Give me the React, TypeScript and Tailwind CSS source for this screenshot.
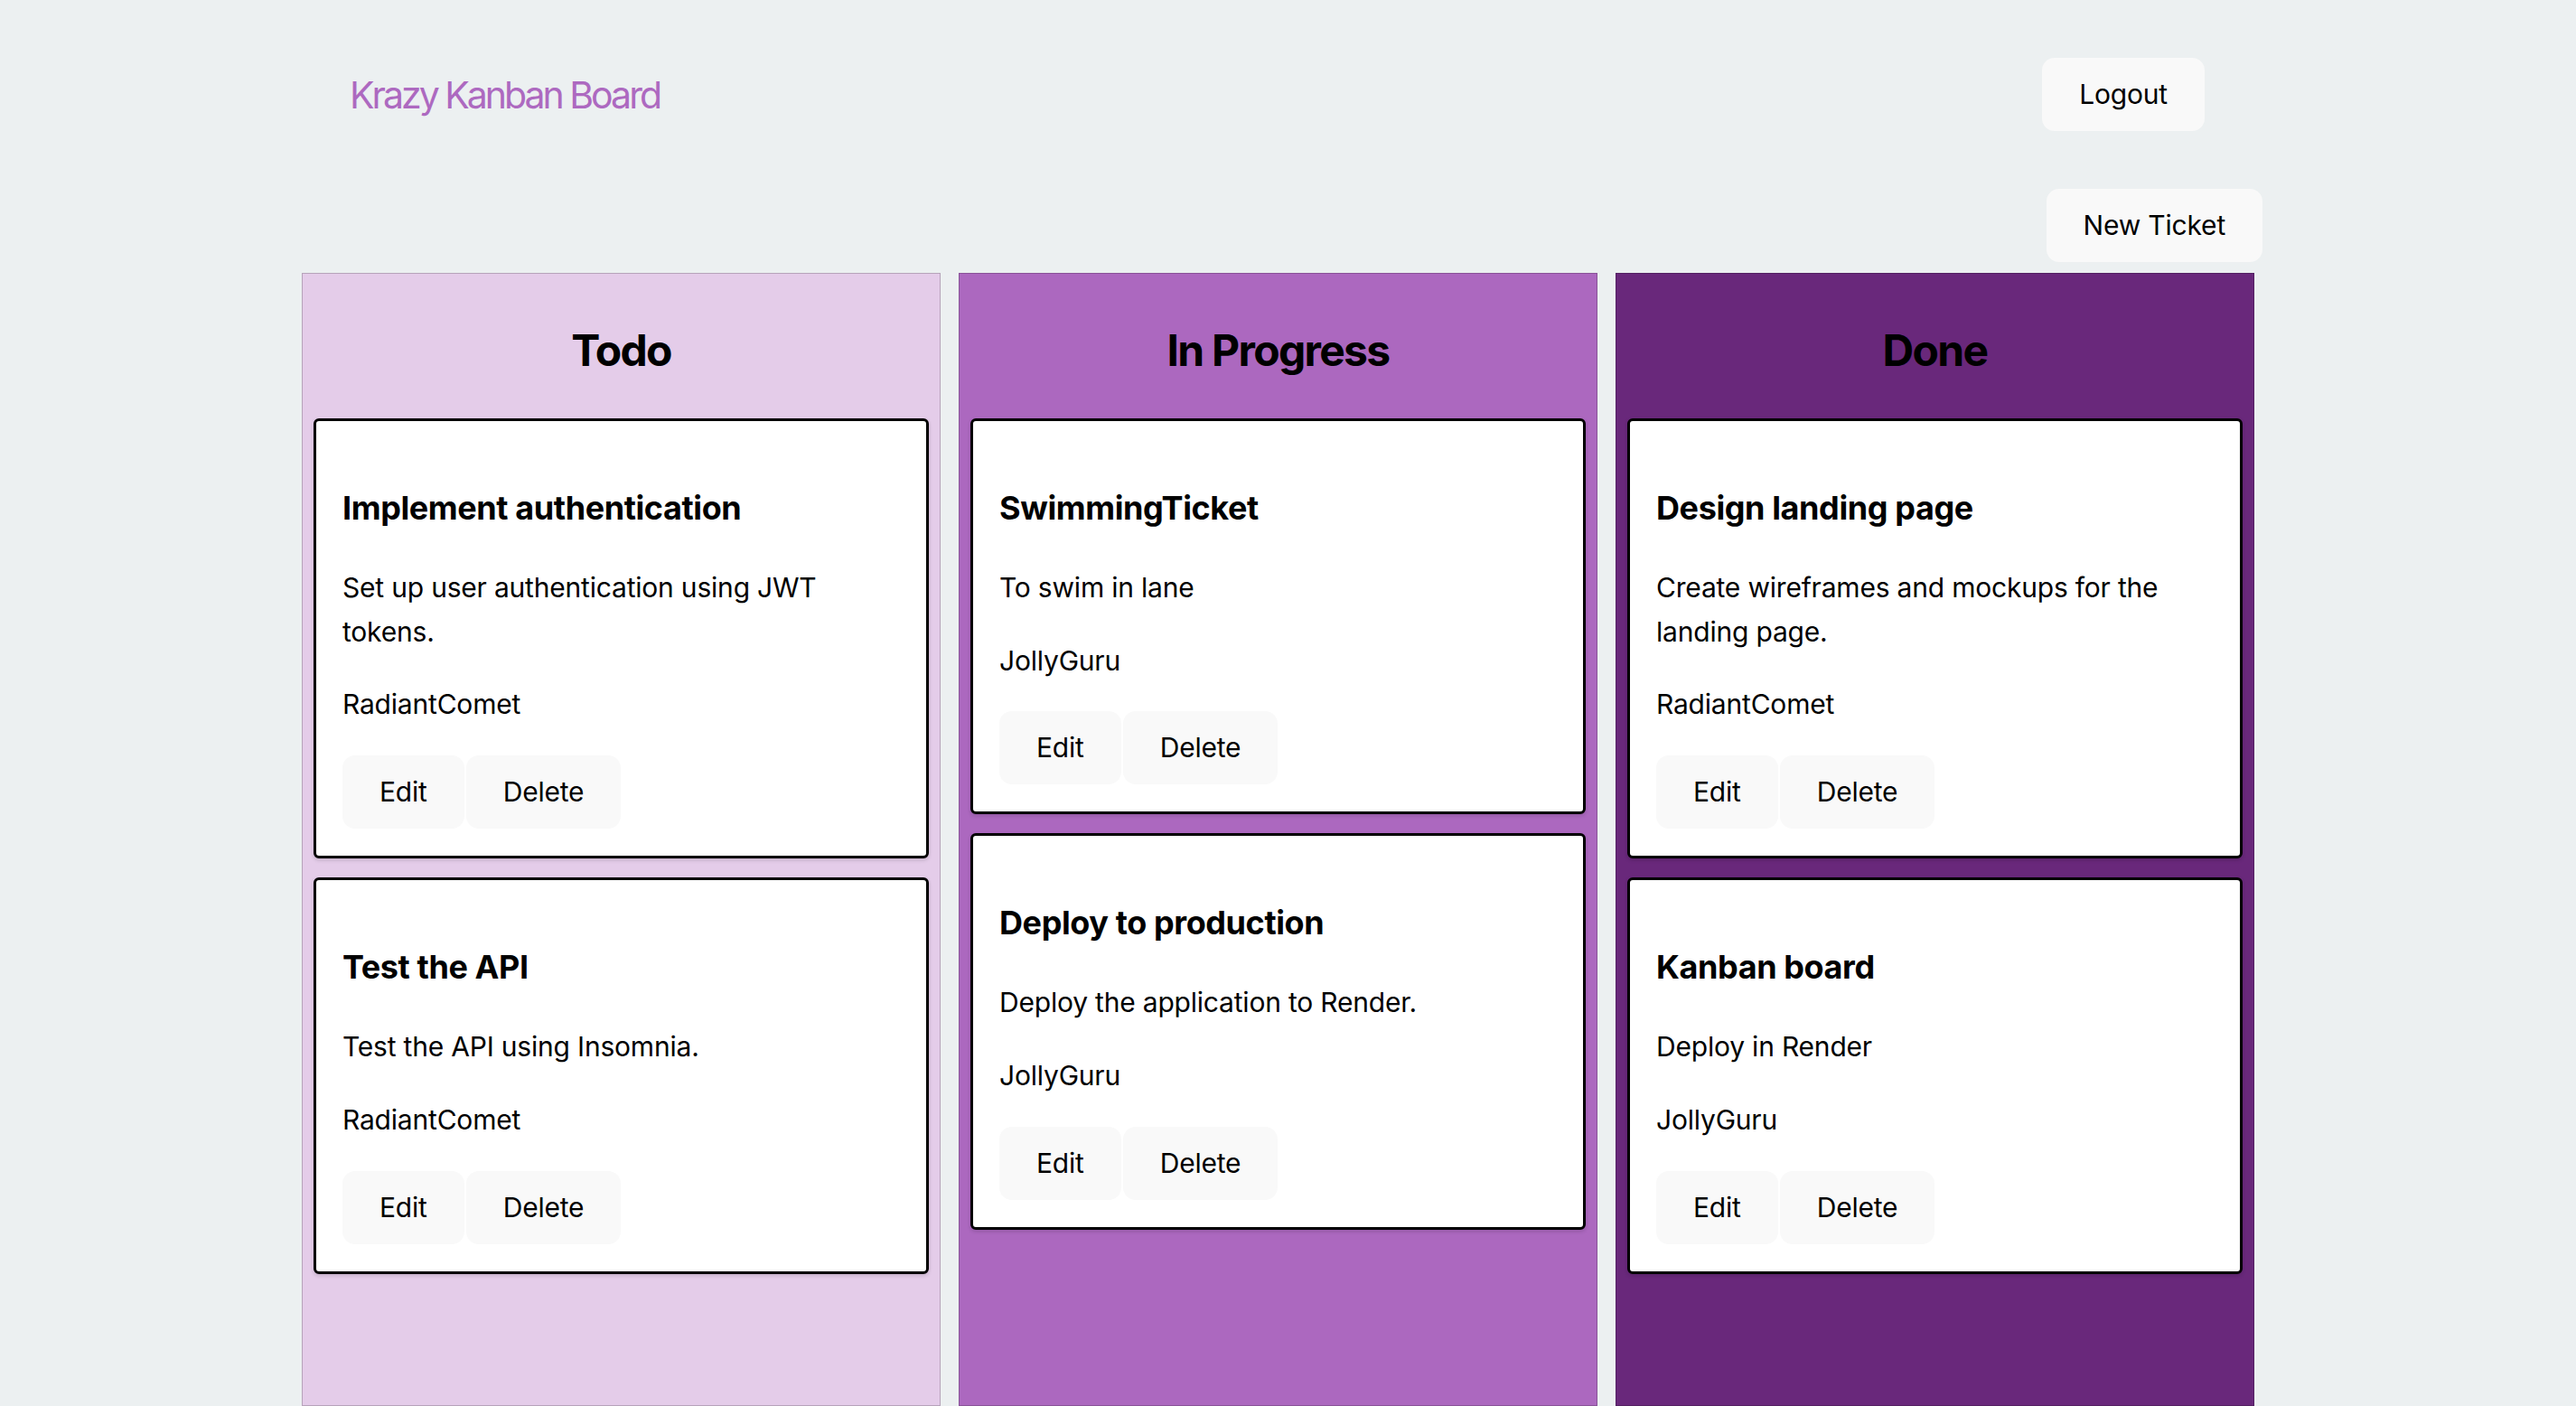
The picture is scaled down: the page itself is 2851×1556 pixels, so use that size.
import React from "react";

type Ticket = { title: string; desc: string; user: string };

const columns: { name: string; bg: string; tickets: Ticket[] }[] = [
  {
    name: "Todo",
    bg: "bg-[#e4cce9]",
    tickets: [
      {
        title: "Implement authentication",
        desc: "Set up user authentication using JWT tokens.",
        user: "RadiantComet",
      },
      { title: "Test the API", desc: "Test the API using Insomnia.", user: "RadiantComet" },
    ],
  },
  {
    name: "In Progress",
    bg: "bg-[#ac68bf]",
    tickets: [
      { title: "SwimmingTicket", desc: "To swim in lane", user: "JollyGuru" },
      { title: "Deploy to production", desc: "Deploy the application to Render.", user: "JollyGuru" },
    ],
  },
  {
    name: "Done",
    bg: "bg-[#69287b]",
    tickets: [
      {
        title: "Design landing page",
        desc: "Create wireframes and mockups for the landing page.",
        user: "RadiantComet",
      },
      { title: "Kanban board", desc: "Deploy in Render", user: "JollyGuru" },
    ],
  },
];

function Btn({ children, className = "" }: { children: React.ReactNode; className?: string }) {
  return (
    <button
      className={
        "flex h-[81px] items-center rounded-[14px] bg-[#f9f9f9] px-[41px] text-[30px] font-normal tracking-[-0.2px] text-black " +
        className
      }
    >
      {children}
    </button>
  );
}

function Card({ t }: { t: Ticket }) {
  return (
    <div className="flex flex-col rounded-[6px] border-[3px] border-black bg-white px-[29px] pt-[74px] pb-[30px] shadow-[0_2px_4px_rgba(0,0,0,0.15)]">
      <h3 className="text-[36px] font-bold leading-[44px] tracking-[-0.4px] text-black">{t.title}</h3>
      <p className="mt-[42px] text-[30px] leading-[48.7px] tracking-[-0.2px] text-black">{t.desc}</p>
      <p className="mt-[32px] text-[30px] leading-[48.7px] tracking-[-0.2px] text-black">{t.user}</p>
      <div className="mt-[32px] flex gap-[2px]">
        <Btn>Edit</Btn>
        <Btn>Delete</Btn>
      </div>
    </div>
  );
}

export default function App() {
  return (
    <div className="flex h-screen flex-col overflow-hidden bg-[#ecf0f1] font-['Inter',sans-serif]">
      <nav className="mt-[64px] flex h-[81px] items-center pl-[387px] pr-[411px]">
        <h1 className="text-[41px] font-normal leading-[50px] tracking-[-3px] text-[#ad69c0]">Krazy Kanban Board</h1>
        <Btn className="ml-auto">Logout</Btn>
      </nav>
      <div className="mt-[64px] flex justify-end pr-[347px]">
        <Btn>New Ticket</Btn>
      </div>
      <div className="ml-[334px] mt-[12px] grid w-[2161px] flex-1 grid-cols-3 gap-[20px]">
        {columns.map((c) => (
          <div key={c.name} className={"flex flex-col border border-black/20 " + c.bg}>
            <h2 className="pt-[56px] text-center text-[48px] font-bold leading-[58px] tracking-[-1.7px] text-black">
              {c.name}
            </h2>
            <div className="mt-[46px] flex flex-col gap-[21px] px-[12px]">
              {c.tickets.map((t) => (
                <Card key={t.title} t={t} />
              ))}
            </div>
          </div>
        ))}
      </div>
    </div>
  );
}
